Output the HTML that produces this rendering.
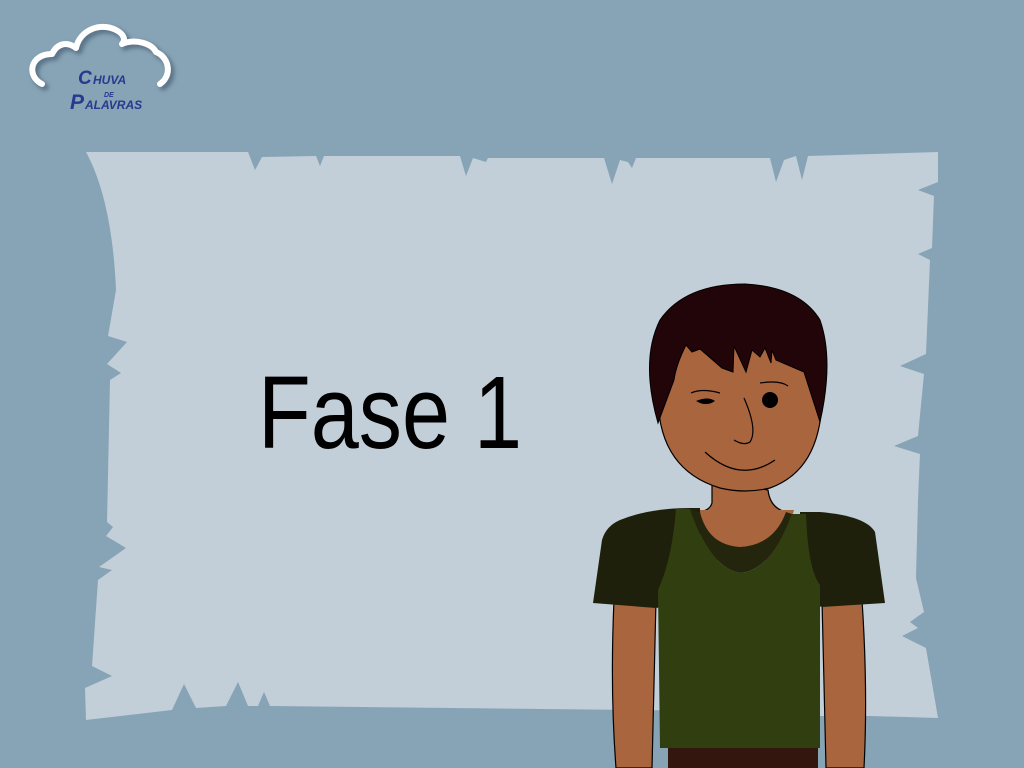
<!DOCTYPE html>
<html><head><meta charset="utf-8"><style>
html,body{margin:0;padding:0;width:1024px;height:768px;overflow:hidden;background:#87a3b6}
svg{display:block}
</style></head><body>
<svg width="1024" height="768" viewBox="0 0 1024 768" xmlns="http://www.w3.org/2000/svg">
<defs><filter id="sh" x="-20%" y="-20%" width="140%" height="140%"><feGaussianBlur stdDeviation="2"/></filter></defs>
<rect width="1024" height="768" fill="#87a3b6"/>
<!-- paper -->
<path fill="#c2ced8" d="M86,152 L248,152 L255,170 L262,157 L316,156 L320,166 L324,156 L460,156 L466,176 L473,158 L486,162 L488,158 L604,158 L612,184 L620,160 L628,162 L632,168 L636,158 L770,158 L776,182 L784,160 L796,156 L802,180 L808,156 L938,152 L938,182 L918,190 L934,196 L932,248 L918,254 L930,260 L926,354 L900,366 L924,374 L918,436 L894,446 L920,454 L918,500 L916,578 L924,612 L910,622 L918,628 L902,636 L926,648 L938,718 L870,716 L820,716 L820,712 L270,706 L264,692 L258,706 L248,706 L238,682 L226,706 L196,708 L184,684 L172,710 L86,720 L85,688 L112,676 L92,666 L98,580 L112,570 L99,567 L126,548 L106,536 L113,527 L107,522 L110,380 L121,373 L107,364 L127,342 L108,336 L116,290 Q112,200 86,152 Z"/>
<!-- text -->
<text x="258" y="448" font-family="Liberation Sans, sans-serif" font-size="103" fill="#000" textLength="264" lengthAdjust="spacingAndGlyphs">Fase 1</text>
<!-- logo -->
<g fill="none" stroke-linecap="round" stroke-linejoin="round">
<path filter="url(#sh)" stroke="#5a7285" stroke-width="7" d="M42,84 C26,76 30,54 52,54 C58,42 68,42 76,48 C80,30 100,22 116,30 C124,34 126,40 122,44 C136,38 152,44 156,52 C170,58 172,76 160,84" transform="translate(3,3)"/>
<path stroke="#fff" stroke-width="6" d="M42,84 C26,76 30,54 52,54 C58,42 68,42 76,48 C80,30 100,22 116,30 C124,34 126,40 122,44 C136,38 152,44 156,52 C170,58 172,76 160,84"/>
</g>
<g font-family="Liberation Sans, sans-serif" font-weight="bold" fill="#263a8e" font-style="italic">
<text x="78" y="84" font-size="19">C</text><text x="93" y="84" font-size="12">HUVA</text>
<text x="104" y="97" font-size="7">DE</text>
<text x="70" y="109" font-size="21">P</text><text x="85" y="109" font-size="12">ALAVRAS</text>
</g>
<!-- character -->
<g stroke="#000" stroke-width="1.2">
<path fill="#a9653e" d="M614,600 L656,600 L652,768 L616,768 Q610,690 614,600 Z"/>
<path fill="#a9653e" d="M822,600 L862,600 Q868,690 864,768 L826,768 Z"/>
<path fill="#a9653e" d="M712,480 L712,503 Q710,510 700,512 L786,512 Q770,508 768,490 Z"/>
</g>
<path fill="#a9653e" d="M698,510 L794,510 L780,560 L700,560 Z"/>
<rect x="668" y="748" width="150" height="20" fill="#33170e"/>
<path fill="#1f200b" d="M620,520 Q650,508 690,508 L700,508 L700,600 L656,608 L593,603 L602,540 Q606,526 620,520 Z"/>
<path fill="#1f200b" d="M800,512 L820,512 Q866,516 875,532 L885,603 L822,607 L800,600 Z"/>
<path fill="#313f10" d="M676,509 L690,509 Q710,568 740,573 Q772,570 792,514 L806,514 Q808,570 820,585 L820,748 L660,748 L658,590 Q672,560 676,509 Z"/>
<path fill="#23250c" d="M690,509 Q710,568 740,573 Q772,570 792,514 L786,512 Q774,545 740,547 Q708,545 700,512 Z"/>
<path fill="#a9653e" stroke="#000" stroke-width="1.2" d="M658,400 Q660,470 720,488 Q745,494 770,488 Q820,470 822,400 L815,330 L665,330 Z"/>
<path fill="#220508" stroke="#000" stroke-width="1" d="M658,423 Q640,360 660,320 Q685,284 745,284 Q800,287 820,320 Q834,360 820,422 L804,372 L776,360 L772,350 L771,363 L765,348 L760,357 L752,350 L746,372 L734,346 L733,372 L722,368 L700,349 L692,352 L686,345 Q676,365 674,380 Z"/>
<path fill="none" stroke="#000" stroke-width="1.2" d="M691,393 Q702,388 720,393 M760,383 Q780,380 788,386"/>
<path fill="#000" d="M696,401 Q708,396 715,401 Q708,406 700,403 Z"/>
<circle cx="770" cy="400" r="8" fill="#000"/>
<path fill="none" stroke="#000" stroke-width="1.2" d="M744,398 Q758,430 750,442 Q744,446 734,440 M705,452 Q740,484 775,460"/>
</svg>
</body></html>
